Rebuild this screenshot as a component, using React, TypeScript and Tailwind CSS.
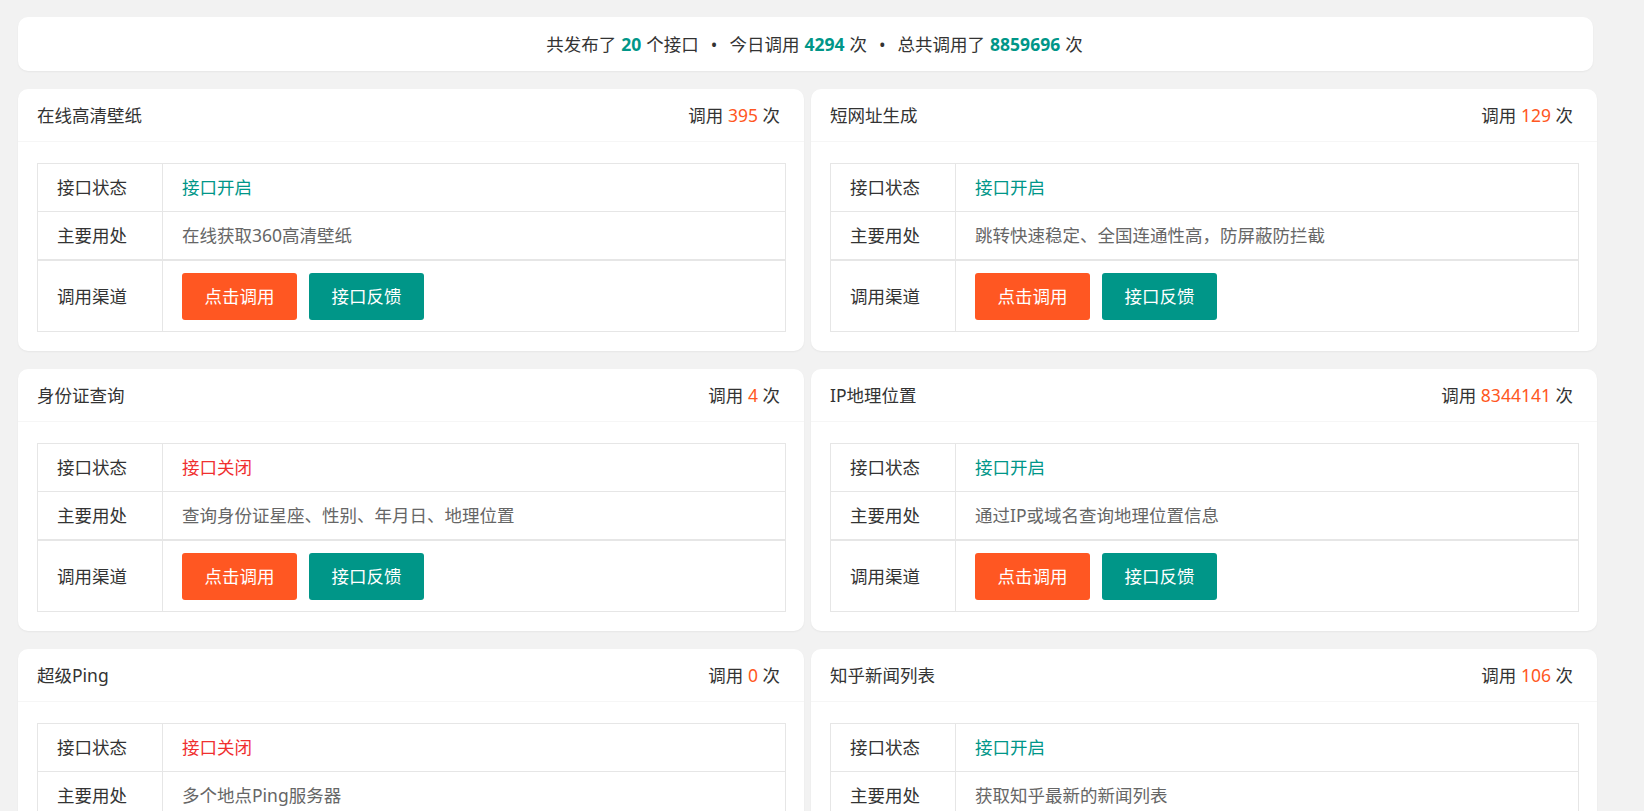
import React from "react"

interface Api {
  title: string
  count: number
  open: boolean
  usage: string
}

const apis: Api[] = [
  { title: "在线高清壁纸", count: 395, open: true, usage: "在线获取360高清壁纸" },
  { title: "短网址生成", count: 129, open: true, usage: "跳转快速稳定、全国连通性高，防屏蔽防拦截" },
  { title: "身份证查询", count: 4, open: false, usage: "查询身份证星座、性别、年月日、地理位置" },
  { title: "IP地理位置", count: 8344141, open: true, usage: "通过IP或域名查询地理位置信息" },
  { title: "超级Ping", count: 0, open: false, usage: "多个地点Ping服务器" },
  { title: "知乎新闻列表", count: 106, open: true, usage: "获取知乎最新的新闻列表" },
]

function ApiCard({ api }: { api: Api }) {
  return (
    <div className="bg-white rounded-[10px] shadow-[0_1px_2px_rgba(0,0,0,0.05)]">
      {/* header */}
      <div className="flex items-center justify-between h-[53px] pl-[19px] pr-[24px] border-b border-[#f6f6f6] text-[17.5px] text-[#333]">
        <span>{api.title}</span>
        <span>
          调用 <span className="text-[#FF5722]">{api.count}</span> 次
        </span>
      </div>

      {/* body */}
      <div className="pt-[21px] pb-[19px] pl-[19px] pr-[18px]">
        <div className="border border-[#e6e6e6] text-[17.5px]">
          <div className="flex h-[48px] border-b border-[#e6e6e6]">
            <div className="w-[125px] shrink-0 border-r border-[#e6e6e6] px-[19px] flex items-center text-[#333]">接口状态</div>
            <div className={`px-[19px] flex items-center ${api.open ? "text-[#009688]" : "text-[#f0302f]"}`}>
              {api.open ? "接口开启" : "接口关闭"}
            </div>
          </div>
          <div className="flex h-[49px] border-b-2 border-[#e6e6e6]">
            <div className="w-[125px] shrink-0 border-r border-[#e6e6e6] px-[19px] flex items-center text-[#333]">主要用处</div>
            <div className="px-[19px] flex items-center text-[#666]">{api.usage}</div>
          </div>
          <div className="flex h-[70px]">
            <div className="w-[125px] shrink-0 border-r border-[#e6e6e6] px-[19px] flex items-center text-[#333]">调用渠道</div>
            <div className="flex items-center gap-[12px] px-[19px]">
              <button className="w-[115px] h-[47px] rounded-[3px] bg-[#FF5722] text-white text-[17.5px]">点击调用</button>
              <button className="w-[115px] h-[47px] rounded-[3px] bg-[#009688] text-white text-[17.5px]">接口反馈</button>
            </div>
          </div>
        </div>
      </div>
    </div>
  )
}

export default function App() {
  return (
    <div className="min-h-screen bg-[#f2f2f2] font-['Noto_Sans','Noto_Sans_CJK_SC',sans-serif] pt-[17px] pl-[18px] pr-[47px] pb-[18px]">
      {/* stats banner */}
      <div className="w-[1575px] h-[54px] bg-white rounded-[10px] shadow-[0_1px_2px_rgba(0,0,0,0.05)] flex items-center justify-center pl-[18px] text-[17.5px] text-[#333]">
        <span>共发布了 </span>
        <b className="text-[#009688] mx-[5px]">20</b>
        <span> 个接口</span>
        <span className="mx-[12px]">•</span>
        <span>今日调用 </span>
        <b className="text-[#009688] mx-[5px]">4294</b>
        <span> 次</span>
        <span className="mx-[12px]">•</span>
        <span>总共调用了 </span>
        <b className="text-[#009688] mx-[5px]">8859696</b>
        <span> 次</span>
      </div>

      <div className="grid grid-cols-2 gap-x-[7px] gap-y-[18px] mt-[18px]">
        {apis.map((api) => (
          <ApiCard key={api.title} api={api} />
        ))}
      </div>
    </div>
  )
}
